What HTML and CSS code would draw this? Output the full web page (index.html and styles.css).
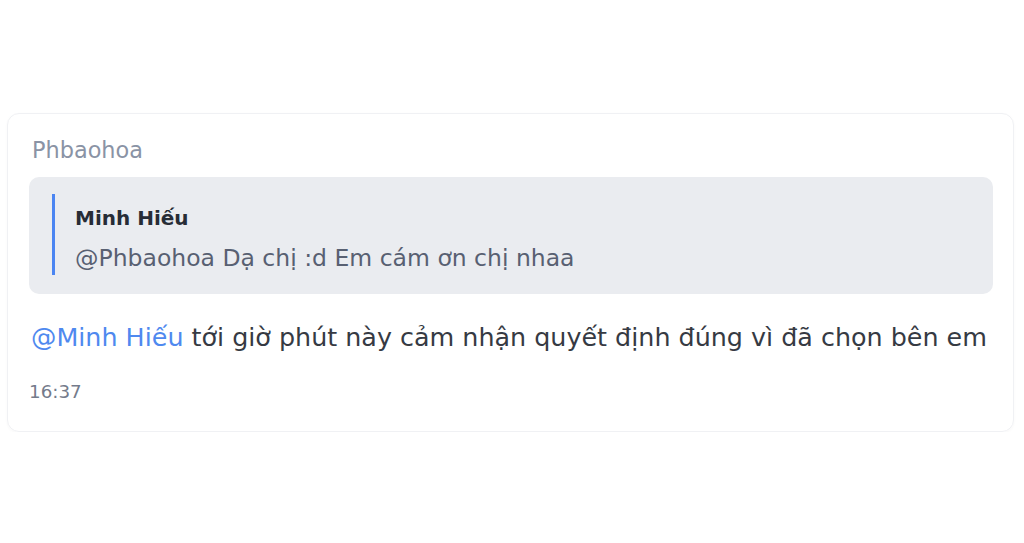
FILE: index.html
```html
<!DOCTYPE html>
<html lang="vi">
<head>
<meta charset="utf-8">
<link rel="stylesheet" href="styles.css">
</head>
<body>
<div class="page">
  <div class="card">
    <div class="sender">Phbaohoa</div>
    <div class="quote">
      <div class="quote-inner">
        <div class="quote-name">Minh Hiếu</div>
        <div class="quote-text">@Phbaohoa Dạ chị :d Em cám ơn chị nhaa</div>
      </div>
    </div>
    <div class="message"><span class="mention">@Minh Hiếu</span> tới giờ phút này cảm nhận quyết định đúng vì đã chọn bên em</div>
    <div class="time">16:37</div>
  </div>
</div>
</body>
</html>
```
FILE: styles.css
```css
html, body {
  margin: 0;
  padding: 0;
  background: #ffffff;
}
body {
  font-family: "DejaVu Sans", Inter, "Noto Sans", sans-serif;
}
.page {
  padding: 113px 10px 0 7px;
}
.card {
  border: 1px solid #f0f1f4;
  border-radius: 12px;
  box-shadow: 0 1px 3px rgba(0, 0, 0, 0.03);
  padding: 23px 20px 28px 21px;
}
.sender {
  font-size: 22.4px;
  line-height: 26px;
  color: #8a93a5;
  padding-left: 3px;
}
.quote {
  margin-top: 14px;
  background: #eaecf0;
  border-radius: 10px;
  padding: 17px 20px 19px 23px;
}
.quote-inner {
  border-left: 3px solid #4b85f2;
  padding: 9px 0 2px 20px;
}
.quote-name {
  font-size: 20px;
  font-weight: 700;
  line-height: 30px;
  color: #272c36;
}
.quote-text {
  font-size: 23.5px;
  line-height: 30px;
  margin-top: 10px;
  color: #586072;
}
.message {
  margin-top: 27px;
  font-size: 25.4px;
  line-height: 32px;
  color: #363a43;
  padding-left: 2px;
}
.mention {
  color: #4f89ef;
}
.time {
  margin-top: 28px;
  font-size: 18.3px;
  line-height: 22px;
  color: #747b8b;
  padding-left: 0;
}
```
